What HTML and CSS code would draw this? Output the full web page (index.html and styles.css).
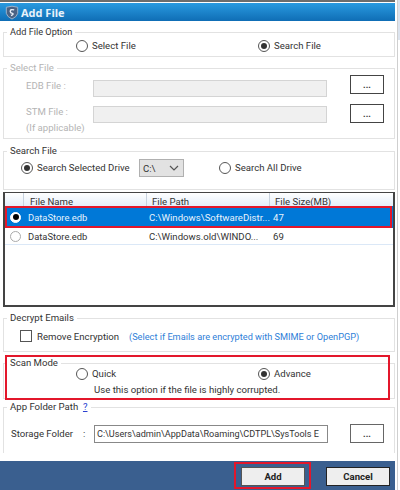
FILE: index.html
```html
<!DOCTYPE html>
<html lang="en">
<head>
    <meta charset="UTF-8">
    <title>Add File</title>
    <link rel="stylesheet" href="styles.css">
</head>
<body>
    <div class="window">
        <!-- Title bar -->
        <div class="title-bar">
            <svg class="title-icon" width="14" height="15" viewBox="0 0 16 16">
                <path d="M1.5 2 L8 0.8 L14.5 2 L14.5 9 Q13.5 13 8 15.5 Q2.5 13 1.5 9 Z" fill="#4b6283" stroke="#a9bbd0" stroke-width="1"/>
                <path d="M10.5 5 Q6 3.8 6 6.8 Q6 8.4 8.5 9 Q10.5 10 6.8 11.4" fill="none" stroke="#e6edf5" stroke-width="1.6"/>
            </svg>
            <span class="title-text">Add File</span>
        </div>

        <!-- Add File Option -->
        <fieldset class="group option-group">
            <legend>Add File Option</legend>
            <div class="radio-row">
                <label class="radio"><span class="dot"></span>Select File</label>
                <label class="radio"><span class="dot checked"></span>Search File</label>
            </div>
        </fieldset>

        <!-- Select File (disabled) -->
        <fieldset class="group select-group disabled">
            <legend>Select File</legend>
            <div class="file-row">
                <span class="file-label">EDB File :</span>
                <span class="file-input"></span>
                <button class="dots-btn">...</button>
            </div>
            <div class="file-row stm-row">
                <span class="file-label">STM File :<br>(If applicable)</span>
                <span class="file-input"></span>
                <button class="dots-btn">...</button>
            </div>
        </fieldset>

        <!-- Search File -->
        <fieldset class="group search-group">
            <legend>Search File</legend>
            <div class="search-row">
                <label class="radio selected-drive"><span class="dot checked"></span>Search Selected Drive</label>
                <span class="drive-select">C:\<svg width="10" height="6" viewBox="0 0 10 6"><path d="M1 1 L5 5 L9 1" fill="none" stroke="#555" stroke-width="1.2"/></svg></span>
                <label class="radio all-drive"><span class="dot"></span>Search All Drive</label>
            </div>
        </fieldset>

        <!-- File list -->
        <div class="file-list">
            <div class="list-head">
                <div class="col col-check"></div>
                <div class="col col-name">File Name</div>
                <div class="col col-path">File Path</div>
                <div class="col col-size">File Size(MB)</div>
            </div>
            <div class="list-row selected">
                <div class="col-check"><span class="dot small checked"></span></div>
                <div class="col-name">DataStore.edb</div>
                <div class="col-path">C:\Windows\SoftwareDistr...</div>
                <div class="col-size">47</div>
            </div>
            <div class="list-row">
                <div class="col-check"><span class="dot small"></span></div>
                <div class="col-name">DataStore.edb</div>
                <div class="col-path">C:\Windows.old\WINDO...</div>
                <div class="col-size">69</div>
            </div>
        </div>

        <!-- Decrypt Emails -->
        <fieldset class="group decrypt-group">
            <legend>Decrypt Emails</legend>
            <div class="decrypt-row">
                <span class="checkbox"></span>
                <span class="decrypt-label">Remove Encryption</span>
                <span class="decrypt-note">(Select if Emails are encrypted with SMIME or OpenPGP)</span>
            </div>
        </fieldset>

        <!-- Scan Mode -->
        <fieldset class="group scan-group">
            <legend>Scan Mode</legend>
            <div class="radio-row">
                <label class="radio"><span class="dot"></span>Quick</label>
                <label class="radio"><span class="dot checked"></span>Advance</label>
            </div>
            <div class="scan-note">Use this option if the file is highly corrupted.</div>
        </fieldset>

        <!-- App Folder Path -->
        <fieldset class="group folder-group">
            <legend>App Folder Path &nbsp;<a class="help-link">?</a></legend>
            <div class="folder-row">
                <span class="folder-label">Storage Folder</span>
                <span class="folder-colon">:</span>
                <span class="folder-input">C:\Users\admin\AppData\Roaming\CDTPL\SysTools E</span>
                <button class="dots-btn">...</button>
            </div>
        </fieldset>

        <!-- Footer -->
        <div class="footer">
            <button class="footer-btn add-btn">Add</button>
            <button class="footer-btn">Cancel</button>
        </div>

        <!-- Red highlights drawn over the screenshot -->
        <div class="mark mark-row"></div>
        <div class="mark mark-scan"></div>
        <div class="mark mark-add"></div>
    </div>
    <div class="desktop-edge"></div>
</body>
</html>
```

FILE: styles.css
```css
* {
    margin: 0;
    padding: 0;
    box-sizing: border-box;
    font-family: Roboto, 'Liberation Sans', sans-serif;
}

body {
    background-color: #ffffff;
    color: #333333;
    font-size: 9.6px;
    overflow: hidden;
}

.window {
    position: relative;
    width: 395px;
    height: 490px;
    border-top: 2px solid #6d6d6d;
    background-color: #ffffff;
}

/* Sliver of the window behind, at the right of the dialog */
.desktop-edge {
    position: absolute;
    left: 397px;
    top: 0;
    width: 3px;
    height: 490px;
    border-left: 1px solid #cfcfcf;
    background: linear-gradient(#dbe3ee 0, #dbe3ee 40px, #ffffff 40px);
}

/* Title bar */
.title-bar {
    height: 18px;
    margin-top: 1px;
    padding-left: 5px;
    display: flex;
    align-items: center;
    gap: 2px;
    background: linear-gradient(#2a9ae0, #0f6db5);
}

.title-text {
    color: #e8f2fa;
    font-family: 'Open Sans', sans-serif;
    font-size: 11px;
    font-weight: bold;
}

/* Group boxes */
.group {
    margin-left: 3px;
    width: 392px;
    border: 1px solid #e2e2e2;
}

.group legend {
    margin-left: 3px;
    padding: 0 3px;
    line-height: 12px;
}

.option-group {
    height: 31px;
    margin-top: 5px;
}

.option-group legend {
    font-size: 9.2px;
}

.select-group {
    height: 77px;
    margin-top: 5px;
}

.search-group {
    height: 45px;
    margin-top: 6px;
}

.decrypt-group {
    height: 40px;
    margin-top: 5px;
}

.scan-group {
    height: 42px;
    margin-top: 5px;
}

.folder-group {
    height: 52px;
    margin-top: 2px;
    border-bottom: none;
}

.disabled legend,
.disabled .file-label {
    color: #b4b4b4;
}

/* Radios */
.radio-row {
    display: grid;
    grid-template-columns: 182px 1fr;
    padding-left: 72px;
    margin-top: 1px;
}

.radio {
    display: flex;
    align-items: center;
    gap: 4px;
    line-height: 14px;
    white-space: nowrap;
}

.dot {
    flex: none;
    width: 12px;
    height: 12px;
    border-radius: 50%;
    border: 1px solid #555;
    background-color: #fff;
    display: flex;
    align-items: center;
    justify-content: center;
}

.dot.checked::after {
    content: "";
    width: 6px;
    height: 6px;
    border-radius: 50%;
    background-color: #333;
}

.dot.small {
    width: 11px;
    height: 11px;
    border-color: #aaa;
}

/* Select File rows */
.file-row {
    display: flex;
    align-items: flex-start;
    height: 26px;
}

.file-label {
    width: 67px;
    margin-left: 22px;
    padding-top: 4px;
    line-height: 16px;
    white-space: nowrap;
}

.file-input {
    width: 234px;
    height: 17px;
    margin-top: 6px;
    background-color: #f0f0f0;
    border: 1px solid #d4d4d4;
}

.dots-btn {
    width: 34px;
    height: 19px;
    margin-left: 23px;
    margin-top: 1px;
    background-color: #fff;
    border: 1px solid #444;
    font-size: 9px;
    font-weight: bold;
    color: #333;
}

.stm-row .dots-btn {
    margin-top: 4px;
}

/* Search File row */
.search-row {
    display: flex;
    align-items: center;
    margin-top: 1px;
    padding-left: 17px;
    height: 20px;
}

.selected-drive {
    width: 118px;
}

.drive-select {
    width: 45px;
    height: 18px;
    padding: 0 4px 0 3px;
    display: flex;
    align-items: center;
    justify-content: space-between;
    background-color: #e2e2e2;
    border: 1px solid #b0b0b0;
}

.all-drive {
    margin-left: 35px;
}

/* File list */
.file-list {
    width: 392px;
    height: 115px;
    margin: 2px 0 0 3px;
    border: 2px solid #444;
    border-top-width: 1px;
}

.list-head,
.list-row {
    display: grid;
    grid-template-columns: 19px 123px 123px 1fr;
    align-items: center;
}

.list-head {
    height: 13px;
    background: linear-gradient(#ffffff, #e4eefa);
    overflow: hidden;
}

.col {
    height: 100%;
    padding-left: 5px;
    border-right: 1px solid #c8d2de;
    line-height: 17px;
}

.col.col-name {
    padding-left: 6px;
}

.col-size {
    border-right: none;
}

.list-row {
    height: 17px;
    color: #333;
    border-bottom: 1px solid #dbe8f7;
}

.list-row .col-name {
    padding-left: 4px;
    font-size: 9.4px;
}

.list-row .col-path {
    padding-left: 2px;
}

.list-row .col-size {
    padding-left: 3px;
}

.list-row .col-check {
    padding-left: 5px;
    display: flex;
}

.list-row.selected {
    height: 22px;
    background-color: #0078d7;
    color: #e8f3fc;
    border-bottom: none;
}

.selected .dot {
    border-color: #fff;
    background-color: #fff;
}

.selected .dot::after {
    background-color: #000;
}

/* Decrypt Emails */
.decrypt-row {
    display: flex;
    align-items: center;
    margin-top: 6px;
    padding-left: 16px;
    height: 12px;
}

.checkbox {
    flex: none;
    width: 12px;
    height: 12px;
    border: 1px solid #555;
    background-color: #fff;
}

.decrypt-label {
    width: 88px;
    margin-left: 5px;
    white-space: nowrap;
}

.decrypt-note {
    margin-left: 4px;
    color: #2f80d8;
    font-size: 9.2px;
    white-space: nowrap;
}

/* Scan Mode */
.scan-group .radio-row {
    margin-top: -2px;
}

.scan-note {
    padding-left: 90px;
    margin-top: 3px;
    line-height: 12px;
}

/* App Folder Path */
.help-link {
    color: #2a3fd0;
    text-decoration: underline;
}

.folder-row {
    display: flex;
    align-items: center;
    height: 19px;
    margin-top: 11px;
    padding-left: 7px;
}

.folder-label {
    width: 72px;
    white-space: nowrap;
}

.folder-colon {
    width: 11px;
}

.folder-input {
    width: 234px;
    height: 18px;
    padding-left: 2px;
    border: 1px solid #888;
    font-size: 9.1px;
    line-height: 16px;
    white-space: nowrap;
    overflow: hidden;
}

.folder-row .dots-btn {
    margin-top: 0;
    margin-left: 22px;
    border-color: #666;
}

/* Footer */
.footer {
    height: 29px;
    margin-top: 8px;
    padding: 2px 5px 0 0;
    display: flex;
    align-items: center;
    justify-content: flex-end;
    gap: 21px;
    background-color: #3a5f8f;
}

.footer-btn {
    width: 64px;
    height: 19px;
    background-color: #eeeeee;
    border: 1px solid #222;
    font-size: 9.6px;
    font-weight: bold;
    color: #222;
}

.add-btn {
    border-color: #555;
}

/* Red marks */
.mark {
    position: absolute;
    border: 2px solid #e3172b;
}

.mark-row {
    left: 5px;
    top: 204px;
    width: 387px;
    height: 22px;
}

.mark-scan {
    left: 5px;
    top: 353px;
    width: 385px;
    height: 45px;
}

.mark-add {
    left: 234px;
    top: 460px;
    width: 77px;
    height: 27px;
}
```
